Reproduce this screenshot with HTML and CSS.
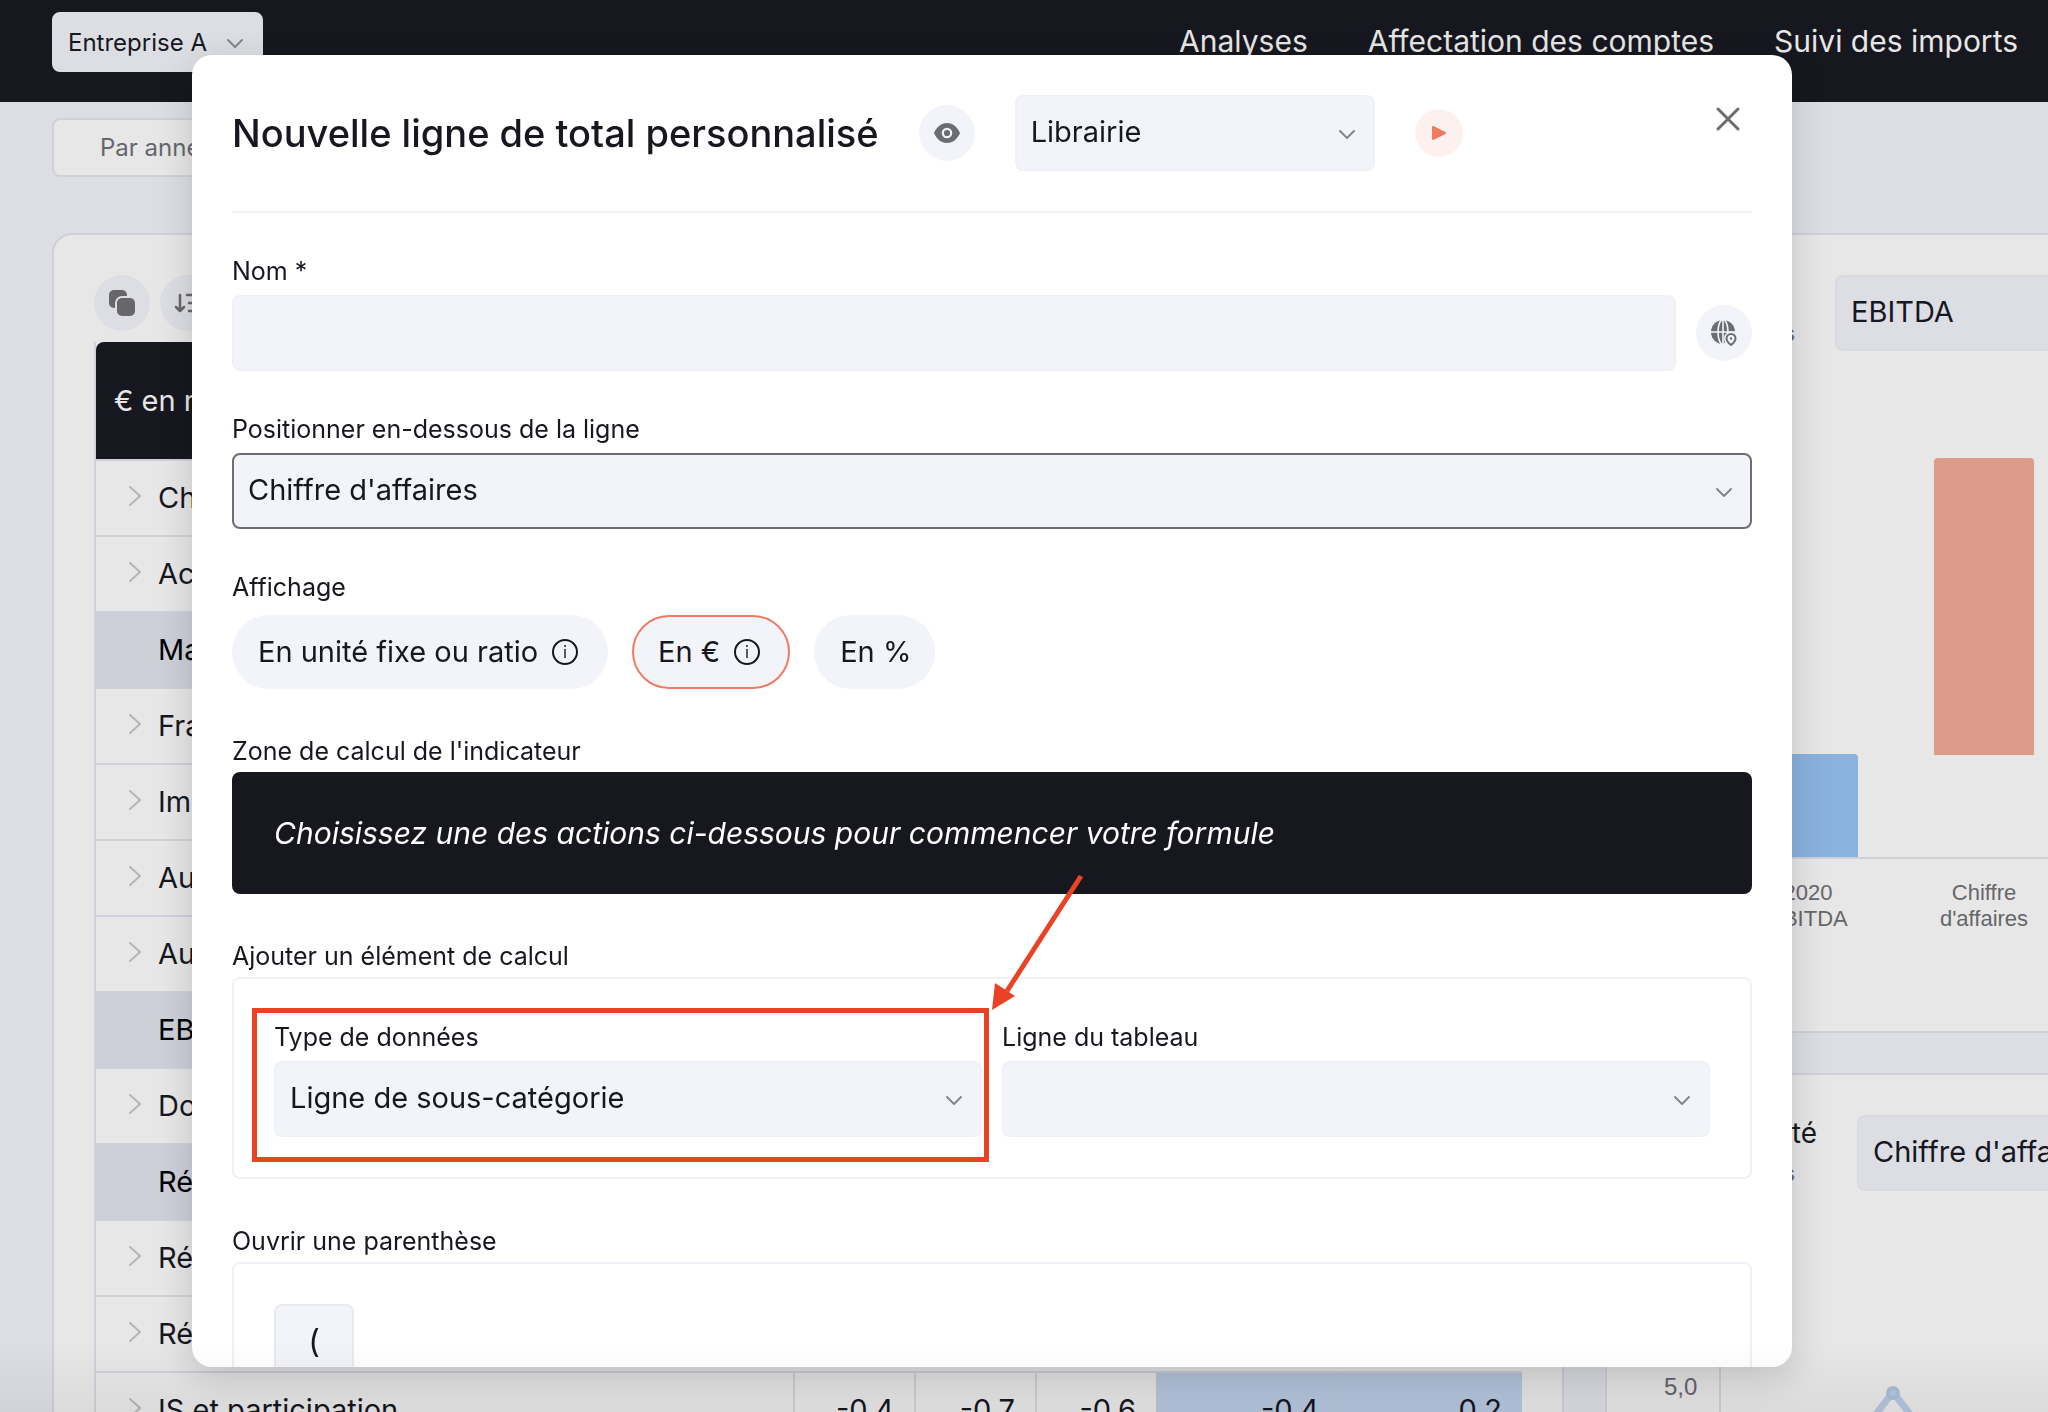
FILE: index.html
```html
<!DOCTYPE html>
<html lang="fr">
<head>
<meta charset="utf-8">
<title>Nouvelle ligne de total personnalisé</title>
<link rel="stylesheet" href="styles.css">
</head>
<body>
<svg class="defs" aria-hidden="true">
  <symbol id="chev-down" viewBox="0 0 16 10"><path d="M1 1l7 7 7-7" fill="none" stroke="currentColor" stroke-width="2" stroke-linecap="round" stroke-linejoin="round"/></symbol>
  <symbol id="chev-right" viewBox="0 0 13 20"><path d="M1 1l10 9-10 9" fill="none" stroke="currentColor" stroke-width="2" stroke-linecap="round" stroke-linejoin="round"/></symbol>
  <symbol id="info" viewBox="0 0 26 26"><circle cx="13" cy="13" r="12" fill="none" stroke="currentColor" stroke-width="2"/><path d="M13 10v9" stroke="currentColor" stroke-width="1.400"/><circle cx="13" cy="7" r="1" fill="currentColor"/></symbol>
</svg>

<header class="topbar">
  <div class="picker company">
    <select aria-label="Entreprise"><option>Entreprise A</option></select>
    <svg class="chev"><use href="#chev-down"/></svg>
  </div>
  <nav class="nav">
    <a href="#">Analyses</a>
    <a href="#">Affectation des comptes</a>
    <a href="#">Suivi des imports</a>
  </nav>
</header>

<main class="page">
  <button class="period" type="button">Par année</button>
  <div class="columns">
    <section class="card report">
      <div class="tools">
        <button class="round" type="button" aria-label="Copier"><svg width="28" height="28" viewBox="0 0 28 28"><rect x="1" y="1" width="18" height="18" rx="5" fill="#66666b"/><rect x="8" y="8" width="20" height="20" rx="6" fill="#66666b" stroke="#dddee3" stroke-width="2"/></svg></button>
        <button class="round" type="button" aria-label="Trier"><svg width="28" height="28" viewBox="0 0 28 28" fill="none" stroke="#66666b" stroke-width="2.500" stroke-linecap="round" stroke-linejoin="round"><path d="M6 6v16M2 18l4 4 4-4M13 6h13M15 14h9M15 22h5"/></svg></button>
      </div>
      <table class="pnl">
        <colgroup><col><col class="c-s"><col class="c-s"><col class="c-s"><col class="c-l"><col class="c-l"></colgroup>
        <thead><tr><th colspan="6">€ en milliers</th></tr></thead>
        <tbody>
          <tr><td colspan="6"><svg class="exp"><use href="#chev-right"/></svg>Chiffre d'affaires</td></tr>
          <tr><td colspan="6"><svg class="exp"><use href="#chev-right"/></svg>Achats</td></tr>
          <tr class="sum"><td colspan="6">Marge</td></tr>
          <tr><td colspan="6"><svg class="exp"><use href="#chev-right"/></svg>Frais</td></tr>
          <tr><td colspan="6"><svg class="exp"><use href="#chev-right"/></svg>Impôts</td></tr>
          <tr><td colspan="6"><svg class="exp"><use href="#chev-right"/></svg>Autres</td></tr>
          <tr><td colspan="6"><svg class="exp"><use href="#chev-right"/></svg>Autres</td></tr>
          <tr class="sum"><td colspan="6">EBITDA</td></tr>
          <tr><td colspan="6"><svg class="exp"><use href="#chev-right"/></svg>Dotations</td></tr>
          <tr class="sum"><td colspan="6">Résultat</td></tr>
          <tr><td colspan="6"><svg class="exp"><use href="#chev-right"/></svg>Résultat</td></tr>
          <tr><td colspan="6"><svg class="exp"><use href="#chev-right"/></svg>Résultat</td></tr>
          <tr class="figures"><td><svg class="exp"><use href="#chev-right"/></svg>IS et participation</td><td>-0,4</td><td>-0,7</td><td>-0,6</td><td class="hl">-0,4</td><td class="hl">0,2</td></tr>
        </tbody>
      </table>
    </section>

    <div class="side">
      <section class="card chart-card">
        <div class="chart-head">
          <div class="unit"><span>k€ milliers</span></div>
          <div class="picker"><select aria-label="Indicateur"><option>EBITDA</option></select></div>
        </div>
        <div class="bars">
          <div class="bar blue"></div>
          <div class="bar red"></div>
        </div>
        <div class="ticks"><span>2020<br>EBITDA</span><span>Chiffre<br>d'affaires</span></div>
      </section>
      <section class="card chart-card second">
        <div class="chart-head">
          <div class="unit"><b>Rentabilité</b><span>k€ milliers</span></div>
          <div class="picker"><select aria-label="Indicateur"><option>Chiffre d'affaires</option></select></div>
        </div>
        <div class="line-chart">
          <span class="y-tick">5,0</span>
          <svg class="plot" viewBox="0 0 329 120" width="329" height="120"><path d="M133 105L173 53l40 52" fill="none" stroke="#b4c6dd" stroke-width="7"/><circle cx="173" cy="54" r="5" fill="#b4c6dd" stroke="#a9bdd8" stroke-width="4"/></svg>
        </div>
      </section>
    </div>
  </div>
</main>

<div class="modal" role="dialog" aria-labelledby="title">
  <div class="modal-head">
    <h1 id="title">Nouvelle ligne de total personnalisé</h1>
    <button class="round" type="button" aria-label="Aperçu"><svg width="26" height="20" viewBox="0 0 26 20"><path d="M13 0C7 0 3 4 .4 9a2 2 0 0 0 0 2C3 16 7 20 13 20s10-4 12.600-9a2 2 0 0 0 0-2C23 4 19 0 13 0z" fill="#6c6d72"/><circle cx="13" cy="10" r="4.200" fill="#6c6d72" stroke="#f3f4fa" stroke-width="2.200"/></svg></button>
    <div class="picker library">
      <select aria-label="Librairie"><option>Librairie</option></select>
      <svg class="chev"><use href="#chev-down"/></svg>
    </div>
    <button class="play" type="button" aria-label="Lancer"><svg width="16" height="16" viewBox="0 0 16 16"><path d="M2 2v12l12-6z" fill="#ef7b62" stroke="#ef7b62" stroke-width="2" stroke-linejoin="round"/></svg></button>
    <button class="close" type="button" aria-label="Fermer"><svg width="24" height="24" viewBox="0 0 24 24"><path d="M2 2l20 20M22 2L2 22" stroke="#6c6d72" stroke-width="3" stroke-linecap="round"/></svg></button>
  </div>

  <form class="form">
    <div class="field">
      <label for="name">Nom *</label>
      <div class="name-row">
        <input id="name" type="text">
        <button class="round" type="button" aria-label="Traductions"><svg width="26" height="26" viewBox="0 0 26 26"><circle cx="12" cy="12" r="12" fill="#6c6d72"/><g fill="none" stroke="#f3f4fa" stroke-width="1.600"><path d="M0 12h26"/><ellipse cx="12" cy="12" rx="5" ry="12.500"/><path d="M12 0v26"/></g><path d="M20 11.500a7 7 0 0 0-7 7c0 4 4 8.500 7 8.500s8-4.500 8-8.500a7 7 0 0 0-8-7z" fill="#f3f4fa"/><path d="M20 14a4.500 4.500 0 0 0-4.500 4.500c0 3 4.500 6.500 4.500 6.500s4.500-3.500 4.500-6.500A4.500 4.500 0 0 0 20 14z" fill="none" stroke="#6c6d72" stroke-width="2"/><circle cx="20" cy="18.500" r="1.200" fill="#6c6d72"/></svg></button>
      </div>
    </div>

    <div class="field">
      <label for="below">Positionner en-dessous de la ligne</label>
      <div class="picker focused">
        <select id="below"><option>Chiffre d'affaires</option></select>
        <svg class="chev"><use href="#chev-down"/></svg>
      </div>
    </div>

    <div class="field">
      <span class="label">Affichage</span>
      <div class="pills">
        <button class="pill with-info" type="button">En unité fixe ou ratio <svg width="26" height="26"><use href="#info"/></svg></button>
        <button class="pill with-info active" type="button">En € <svg width="26" height="26"><use href="#info"/></svg></button>
        <button class="pill" type="button">En %</button>
      </div>
    </div>

    <div class="field tight">
      <span class="label">Zone de calcul de l'indicateur</span>
      <p class="formula">Choisissez une des actions ci-dessous pour commencer votre formule</p>
    </div>

    <div class="field tight">
      <span class="label">Ajouter un élément de calcul</span>
      <div class="box pair">
        <div class="field marked">
          <label for="type">Type de données</label>
          <div class="picker">
            <select id="type"><option>Ligne de sous-catégorie</option></select>
            <svg class="chev"><use href="#chev-down"/></svg>
          </div>
          <svg class="arrow" width="96" height="140" viewBox="0 0 96 140"><path d="M90 2L16 117" stroke="#eb4226" stroke-width="5"/><path d="M1 136L4 109l20 13z" fill="#eb4226"/></svg>
        </div>
        <div class="field">
          <label for="line">Ligne du tableau</label>
          <div class="picker">
            <select id="line"><option></option></select>
            <svg class="chev"><use href="#chev-down"/></svg>
          </div>
        </div>
      </div>
    </div>

    <div class="field tight">
      <span class="label">Ouvrir une parenthèse</span>
      <div class="box"><button class="paren" type="button">(</button></div>
    </div>
  </form>
</div>
</body>
</html>
```
FILE: styles.css
```css
* { box-sizing: border-box; }

body {
  margin: 0;
  height: 100vh;
  overflow: hidden;
  background: #dddee3;
  color: #17171f;
  font: 29px/40px Inter, "Liberation Sans", sans-serif;
}

body::after {
  content: "";
  position: fixed;
  inset: auto 0 0;
  height: 72px;
  background: linear-gradient(transparent, rgba(0, 0, 0, .05));
  pointer-events: none;
}

button, input, select { font: inherit; color: inherit; margin: 0; }
button { border: 0; padding: 0; cursor: pointer; }
.defs { display: none; }

/* Shared controls */
.picker { display: grid; align-items: center; }
.picker > * { grid-area: 1 / 1; }
.picker select {
  appearance: none;
  width: 100%;
  height: 76px;
  padding: 0 48px 2px 14px;
  border: 2px solid #f0f1f6;
  border-radius: 8px;
  background: #f3f4fa;
}
.picker.focused select { border-color: #6c6d72; }
.chev {
  justify-self: end;
  width: 16px;
  height: 10px;
  margin: 4px 20px 0 0;
  color: #85868b;
  pointer-events: none;
}
.round {
  display: grid;
  place-items: center;
  flex: none;
  width: 56px;
  height: 56px;
  border-radius: 50%;
  background: #f3f4fa;
}

/* Top bar */
.topbar {
  display: flex;
  justify-content: space-between;
  align-items: flex-start;
  height: 102px;
  padding: 12px 30px 0 52px;
  background: #17171f;
}
.company { width: 211px; }
.company select {
  height: 60px;
  padding: 2px 40px 0 14px;
  border-color: #dddee3;
  background: #dddee3;
  font-size: 24px;
}
.nav { display: flex; gap: 60px; padding-top: 9px; font-size: 30px; }
.nav a { color: #e6e6e6; text-decoration: none; }

/* Page behind the dialog */
.page { padding: 16px 0 0 52px; }
.period {
  height: 59px;
  padding: 0 46px;
  border: 2px solid #cfd0d9;
  border-radius: 8px;
  background: #e7e7e7;
  color: #66666b;
  font-size: 24px;
}
.columns {
  display: grid;
  grid-template-columns: minmax(0, 1fr) 443px;
  gap: 41px;
  margin-top: 56px;
}
.card {
  border: 2px solid #cfd0d9;
  border-radius: 20px;
  background: #e7e7e7;
}
.report { padding: 40px; }
.tools { display: flex; gap: 10px; margin-bottom: 11px; }
.tools .round, .chart-head select { background: #dddee3; }

.pnl { width: 100%; border-collapse: separate; border-spacing: 0; table-layout: fixed; border-left: 2px solid #cfd0d9; }
.c-s { width: 121px; }
.c-l { width: 183px; }
.pnl th {
  height: 117px;
  padding: 0 18px;
  border-radius: 8px 8px 0 0;
  background: #17171f;
  color: #e6e6e6;
  font-weight: 400;
  text-align: left;
}
.pnl td { height: 76px; padding: 0 20px 0 62px; border-top: 2px solid #cfd0d9; }
.pnl .sum td { background: #cdd0d9; color: #000; }
.pnl .figures td + td { padding: 0 20px; border-left: 2px solid #cfd0d9; text-align: right; }
.pnl .figures td.hl { background: #b6c7df; border-left-color: #b9c6da; }
.exp { float: left; width: 13px; height: 20px; margin: 8px 0 0 -29px; color: #b5b5ba; }

.chart-card { border-right: 0; border-radius: 20px 0 0 20px; }
.chart-head { display: flex; justify-content: flex-end; gap: 40px; padding-top: 40px; }
.chart-card .chart-head { padding-top: 38px; }
.chart-head .picker { width: 213px; }
.chart-head select { border-color: #d9dadf; border-right: 0; border-radius: 8px 0 0 8px; padding-right: 0; }
.unit { padding-top: 40px; color: #66666b; font-size: 22px; }
.bars {
  display: flex;
  justify-content: flex-end;
  gap: 76px;
  height: 506px;
  padding-right: 14px;
  border-bottom: 2px solid #cfd0d6;
}
.bar { width: 100px; border-radius: 4px 4px 0 0; }
.blue { height: 103px; align-self: flex-end; background: #8ab2df; }
.red { height: 297px; margin-top: 105px; background: #dd9b8a; }
.ticks {
  display: flex;
  justify-content: flex-end;
  height: 172px;
  padding: 21px 0 0;
  color: #66666b;
  font: 22px/26px "Liberation Sans", sans-serif;
  text-align: center;
}
.ticks span { width: 176px; }
.ticks span:last-child { margin-right: -24px; }
.second { margin-top: 40px; height: 400px; }
.second .picker { width: 191px; }
.second .unit { padding: 0; text-align: right; }
.second .unit span { padding-right: 22px; }
.second b { display: block; color: #17171f; font-size: 28px; font-weight: 400; }
.line-chart { display: flex; margin-top: 140px; padding-left: 57px; }
.y-tick { width: 55px; padding-top: 36px; color: #66666b; font: 24px/36px "Liberation Sans", sans-serif; }
.plot { margin-top: 6px; border-left: 2px solid #cfd0d6; }

/* Dialog */
.modal {
  position: fixed;
  inset: 55px 256px 45px 192px;
  padding: 40px 40px 0;
  overflow: hidden;
  border-radius: 20px;
  background: #fff;
  box-shadow: 0 10px 36px rgba(0, 0, 0, .16);
}
.modal-head {
  display: flex;
  align-items: center;
  height: 118px;
  padding-bottom: 40px;
  border-bottom: 2px solid #f0f1f6;
}
h1 { margin: 0 40px 0 0; font-size: 38px; line-height: 48px; font-weight: 500; white-space: nowrap; }
.library { width: 360px; margin: 0 40px; }
.play { display: grid; place-items: center; width: 48px; height: 48px; border-radius: 50%; background: #fdf1ef; }
.close { display: grid; margin: 0 12px 28px auto; background: none; }

.form { display: grid; gap: 42px; padding-top: 42px; }
.field { display: grid; gap: 8px; }
.field.tight { gap: 5px; padding-top: 4px; }
.field label, .label { font-size: 25px; line-height: 32px; }
.name-row { display: flex; align-items: center; gap: 20px; }
input { flex: 1; height: 76px; padding: 0 14px; border: 2px solid #f0f1f6; border-radius: 8px; background: #f3f4fa; }
.pills { display: flex; gap: 24px; padding-top: 4px; }
.pill { display: flex; align-items: center; gap: 14px; height: 74px; padding: 0 22px 0 24px; border: 2px solid #f3f4fa; border-radius: 37px; background: #f3f4fa; }
.with-info { padding-right: 28px; }
.active { border-color: #ef7b62; }
.formula { margin: 0; padding: 40px 42px; border-radius: 8px; background: #17171f; color: #fff; font-size: 30px; font-style: italic; line-height: 42px; }
.box { padding: 40px; border: 2px solid #f0f1f6; border-radius: 8px; }
.pair { display: grid; grid-template-columns: 1fr 1fr; gap: 20px; padding-top: 42px; }
.marked { position: relative; }
.marked::before {
  content: "";
  position: absolute;
  inset: -13px -7px -25px -22px;
  border: 5px solid #eb4226;
  pointer-events: none;
}
.arrow { position: absolute; left: 717px; top: -147px; pointer-events: none; }
.paren { width: 80px; height: 76px; border: 2px solid #e9eaef; border-radius: 8px; background: #f3f4fa; font-size: 32px; }
```
